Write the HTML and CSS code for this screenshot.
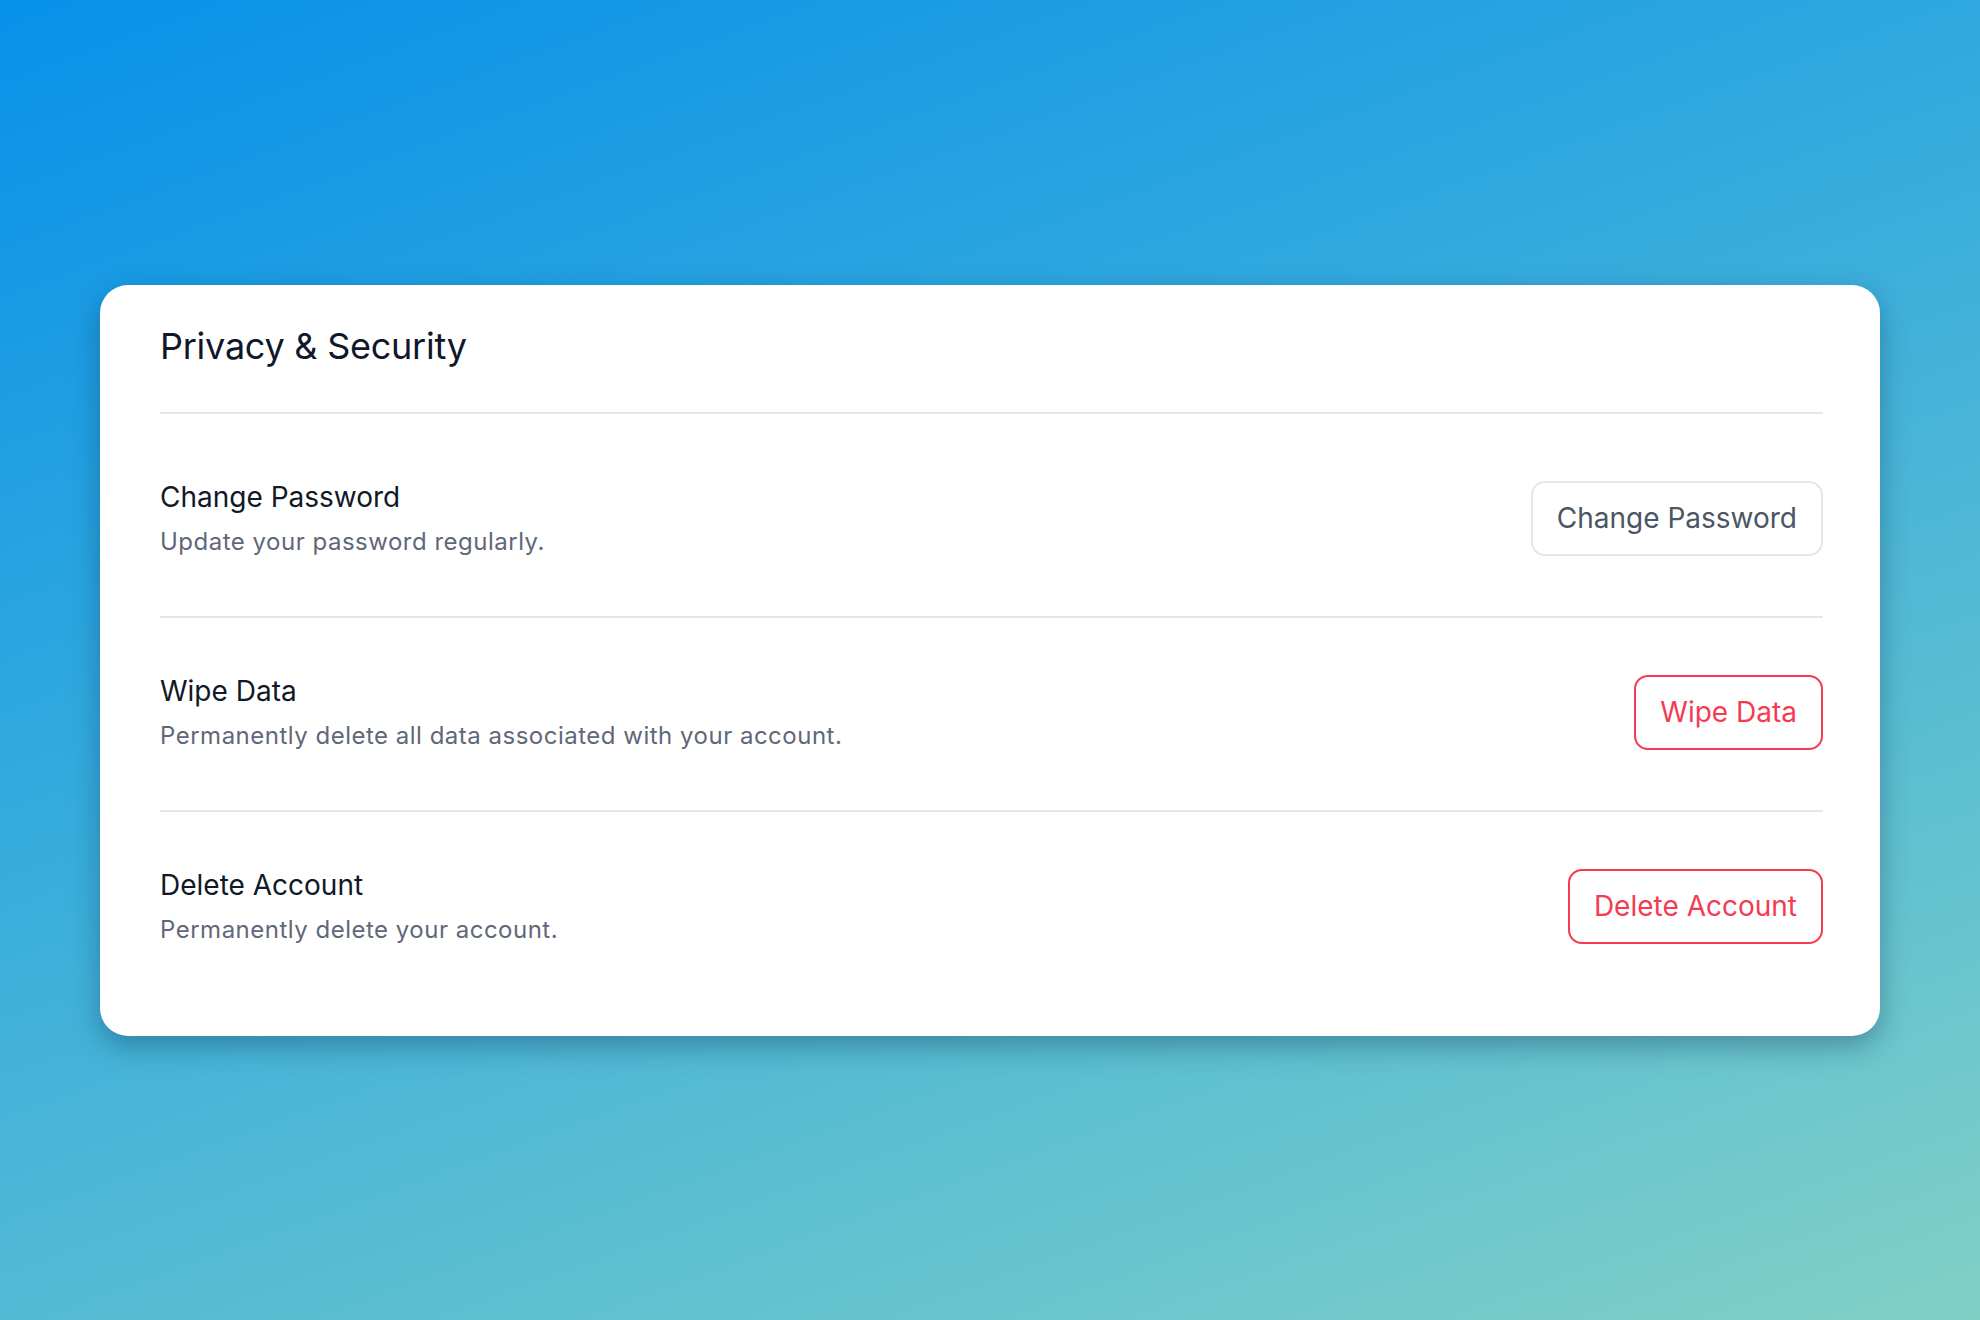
FILE: index.html
```html
<!DOCTYPE html>
<html lang="en">
<head>
<meta charset="utf-8">
<title>Privacy &amp; Security</title>
<link rel="stylesheet" href="styles.css">
</head>
<body>
<main class="page">
  <section class="card">
    <header class="card-header">
      <h1 class="card-title">Privacy &amp; Security</h1>
    </header>
    <div class="rows">
      <div class="row">
        <div class="row-text">
          <h2 class="row-title">Change Password</h2>
          <p class="row-desc">Update your password regularly.</p>
        </div>
        <button class="btn btn-neutral" type="button">Change Password</button>
      </div>
      <div class="row">
        <div class="row-text">
          <h2 class="row-title">Wipe Data</h2>
          <p class="row-desc">Permanently delete all data associated with your account.</p>
        </div>
        <button class="btn btn-danger" type="button">Wipe Data</button>
      </div>
      <div class="row">
        <div class="row-text">
          <h2 class="row-title">Delete Account</h2>
          <p class="row-desc">Permanently delete your account.</p>
        </div>
        <button class="btn btn-danger" type="button">Delete Account</button>
      </div>
    </div>
  </section>
</main>
</body>
</html>
```

FILE: styles.css
```css
* {
  box-sizing: border-box;
}

html, body {
  margin: 0;
  padding: 0;
  height: 100%;
}

body {
  font-family: Inter, "Noto Sans", "Liberation Sans", sans-serif;
  background: linear-gradient(160deg, #0791e9 0%, #3aaedc 45%, #80d0c6 100%);
  min-height: 1320px;
}

.page {
  min-height: 1320px;
  display: flex;
  align-items: center;
  justify-content: center;
}

.card {
  width: 1780px;
  background: #ffffff;
  border-radius: 28px;
  box-shadow: 0 10px 28px rgba(8, 40, 70, 0.35);
  padding: 34px 57px 32px 60px;
}

.card-header {
  border-bottom: 2px solid #e2e7ee;
  padding-bottom: 39px;
}

.card-title {
  margin: 0;
  font-size: 36px;
  line-height: 54px;
  font-weight: 400;
  color: #0f172a;
  letter-spacing: -0.25px;
}

.rows {
  padding-top: 10px;
}

.row {
  display: flex;
  align-items: center;
  justify-content: space-between;
  padding: 57px 0 60px;
  border-bottom: 2px solid #e2e7ee;
}

.row:last-child {
  border-bottom: none;
}

.row-text {
  display: flex;
  flex-direction: column;
}

.row-title {
  margin: 0;
  font-size: 28px;
  line-height: 33px;
  font-weight: 400;
  color: #111827;
}

.row-desc {
  margin: 13px 0 0;
  font-size: 24px;
  line-height: 29px;
  font-weight: 400;
  color: #5f6879;
  letter-spacing: 0.5px;
}

.btn {
  font-family: Inter, "Noto Sans", "Liberation Sans", sans-serif;
  font-size: 28px;
  line-height: 42px;
  font-weight: 400;
  padding: 14.5px 24px;
  border-radius: 14px;
  background: #ffffff;
  cursor: pointer;
}

.btn-neutral {
  border: 2px solid #e2e7ee;
  color: #4b5563;
}

.btn-danger {
  border: 2px solid #f43b52;
  color: #f43b52;
}
```
